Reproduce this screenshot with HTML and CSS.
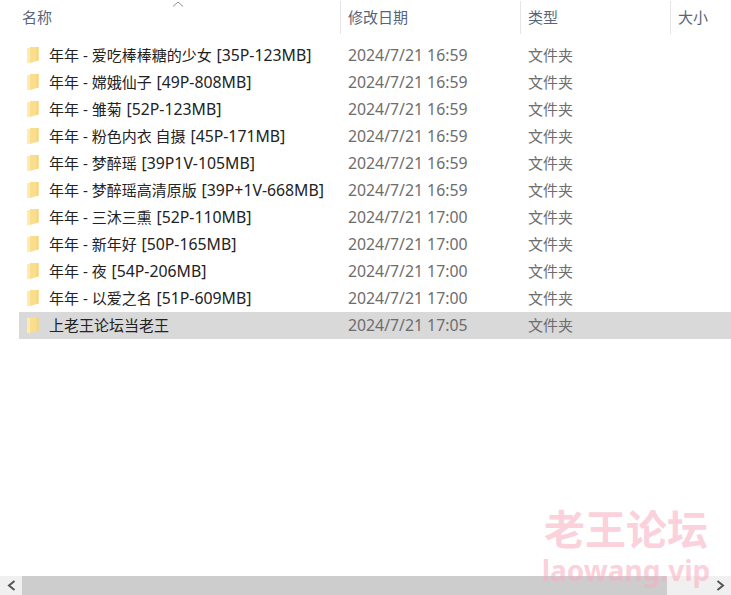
FILE: index.html
```html
<!DOCTYPE html>
<html lang="zh-CN">
<head>
    <meta charset="UTF-8">
    <title>文件夹</title>
    <link rel="stylesheet" href="styles.css">
</head>
<body>
    <svg width="0" height="0" class="defs">
        <symbol id="folder" viewBox="0 0 14 18">
            <path d="M1 2h3v15H1z" fill="#fdecb2"/>
            <path d="M4 1h8.500v13.500L4 17z" fill="#fbdd8e"/>
            <path d="M10.500 1h2v13.500l-2 .6z" fill="#f8d47a"/>
        </symbol>
    </svg>

    <div class="sort-arrow">
        <svg width="12" height="6" viewBox="0 0 12 6"><path d="M1 5.500L6 1l5 4.500" fill="none" stroke="#8a8f96"/></svg>
    </div>

    <div class="header">
        <div class="col-name head">名称</div>
        <div class="col-date head">修改日期</div>
        <div class="col-type head">类型</div>
        <div class="col-size head">大小</div>
    </div>

    <div class="list">
        <div class="row">
            <div class="col-name"><svg class="icon"><use href="#folder"/></svg>年年 - 爱吃棒棒糖的少女 <span class="tag">[35P-123MB]</span></div>
            <div class="col-date">2024/7/21 16:59</div>
            <div class="col-type">文件夹</div>
        </div>
        <div class="row">
            <div class="col-name"><svg class="icon"><use href="#folder"/></svg>年年 - 嫦娥仙子 <span class="tag">[49P-808MB]</span></div>
            <div class="col-date">2024/7/21 16:59</div>
            <div class="col-type">文件夹</div>
        </div>
        <div class="row">
            <div class="col-name"><svg class="icon"><use href="#folder"/></svg>年年 - 雏菊 <span class="tag">[52P-123MB]</span></div>
            <div class="col-date">2024/7/21 16:59</div>
            <div class="col-type">文件夹</div>
        </div>
        <div class="row">
            <div class="col-name"><svg class="icon"><use href="#folder"/></svg>年年 - 粉色内衣 自摄 <span class="tag">[45P-171MB]</span></div>
            <div class="col-date">2024/7/21 16:59</div>
            <div class="col-type">文件夹</div>
        </div>
        <div class="row">
            <div class="col-name"><svg class="icon"><use href="#folder"/></svg>年年 - 梦醉瑶 <span class="tag">[39P1V-105MB]</span></div>
            <div class="col-date">2024/7/21 16:59</div>
            <div class="col-type">文件夹</div>
        </div>
        <div class="row">
            <div class="col-name"><svg class="icon"><use href="#folder"/></svg>年年 - 梦醉瑶高清原版 <span class="tag">[39P+1V-668MB]</span></div>
            <div class="col-date">2024/7/21 16:59</div>
            <div class="col-type">文件夹</div>
        </div>
        <div class="row">
            <div class="col-name"><svg class="icon"><use href="#folder"/></svg>年年 - 三沐三熏 <span class="tag">[52P-110MB]</span></div>
            <div class="col-date">2024/7/21 17:00</div>
            <div class="col-type">文件夹</div>
        </div>
        <div class="row">
            <div class="col-name"><svg class="icon"><use href="#folder"/></svg>年年 - 新年好 <span class="tag">[50P-165MB]</span></div>
            <div class="col-date">2024/7/21 17:00</div>
            <div class="col-type">文件夹</div>
        </div>
        <div class="row">
            <div class="col-name"><svg class="icon"><use href="#folder"/></svg>年年 - 夜 <span class="tag">[54P-206MB]</span></div>
            <div class="col-date">2024/7/21 17:00</div>
            <div class="col-type">文件夹</div>
        </div>
        <div class="row">
            <div class="col-name"><svg class="icon"><use href="#folder"/></svg>年年 - 以爱之名 <span class="tag">[51P-609MB]</span></div>
            <div class="col-date">2024/7/21 17:00</div>
            <div class="col-type">文件夹</div>
        </div>
        <div class="row selected">
            <div class="col-name"><svg class="icon"><use href="#folder"/></svg>上老王论坛当老王</div>
            <div class="col-date">2024/7/21 17:05</div>
            <div class="col-type">文件夹</div>
        </div>
    </div>

    <div class="scrollbar">
        <div class="scroll-btn">
            <svg width="9" height="11" viewBox="0 0 9 11"><path d="M7.500 1L2 5.500 7.500 10" fill="none" stroke="#555" stroke-width="2"/></svg>
        </div>
        <div class="scroll-thumb"></div>
        <div class="scroll-track"></div>
        <div class="scroll-btn">
            <svg width="9" height="11" viewBox="0 0 9 11"><path d="M1.500 1L7 5.500 1.500 10" fill="none" stroke="#555" stroke-width="2"/></svg>
        </div>
    </div>

    <div class="watermark">
        <div class="wm-cn">老王论坛</div>
        <div class="wm-en">laowang.vip</div>
    </div>
</body>
</html>
```

FILE: styles.css
```css
html, body {
    margin: 0;
    height: 100%;
}
body {
    position: relative;
    width: 731px;
    height: 595px;
    overflow: hidden;
    background: #fff;
    font-family: "Noto Sans", "Noto Sans CJK SC", sans-serif;
    font-size: 15px;
    display: flex;
    flex-direction: column;
}
.defs {
    position: absolute;
}
.sort-arrow {
    position: absolute;
    left: 172px;
    top: 1px;
    line-height: 0;
}
.header {
    display: flex;
    height: 33px;
    margin-top: 1px;
    color: #56657a;
}
.head {
    display: flex;
    align-items: center;
    padding-bottom: 3px;
    box-sizing: border-box;
    border-right: 1px solid #e5e5e5;
}
.header .col-name {
    padding-left: 22px;
    width: 341px;
}
.header .col-date {
    width: 180px;
}
.header .col-type {
    width: 150px;
}
.header .col-size {
    border-right: none;
    width: 60px;
    padding-left: 7px;
}
.list {
    flex: 1;
    padding-top: 8px;
    padding-left: 19px;
}
.row {
    display: flex;
    align-items: center;
    height: 27px;
    color: #6d6d6d;
    padding-bottom: 2px;
    box-sizing: border-box;
}
.row .col-name {
    display: flex;
    align-items: center;
    width: 321px;
    color: #222;
    white-space: pre;
}
.tag {
    font-size: 15.800px;
    margin-left: 1px;
}
.row .col-date {
    width: 180px;
    padding-left: 8px;
    box-sizing: border-box;
    font-size: 15.800px;
}
.row .col-type {
    width: 150px;
    padding-left: 8px;
    box-sizing: border-box;
}
.selected {
    background: #d9d9d9;
}
.icon {
    width: 14px;
    height: 18px;
    margin-left: 7px;
    margin-right: 9px;
    flex-shrink: 0;
}
.head.col-date, .head.col-type {
    padding-left: 7px;
}
.scrollbar {
    display: flex;
    height: 19px;
    padding-left: 1px;
    background: #f0f0f0;
}
.scroll-btn {
    width: 21px;
    display: flex;
    align-items: center;
    justify-content: center;
}
.scroll-thumb {
    width: 645px;
    background: #cdcdcd;
}
.scroll-track {
    flex: 1;
}
.watermark {
    position: absolute;
    left: 537px;
    top: 507px;
    width: 178px;
    text-align: center;
    color: rgba(248, 170, 190, 0.55);
    font-weight: bold;
}
.wm-cn {
    font-size: 41px;
    line-height: 44px;
}
.wm-en {
    font-size: 28px;
    line-height: 32px;
    margin-top: 3px;
}
```
